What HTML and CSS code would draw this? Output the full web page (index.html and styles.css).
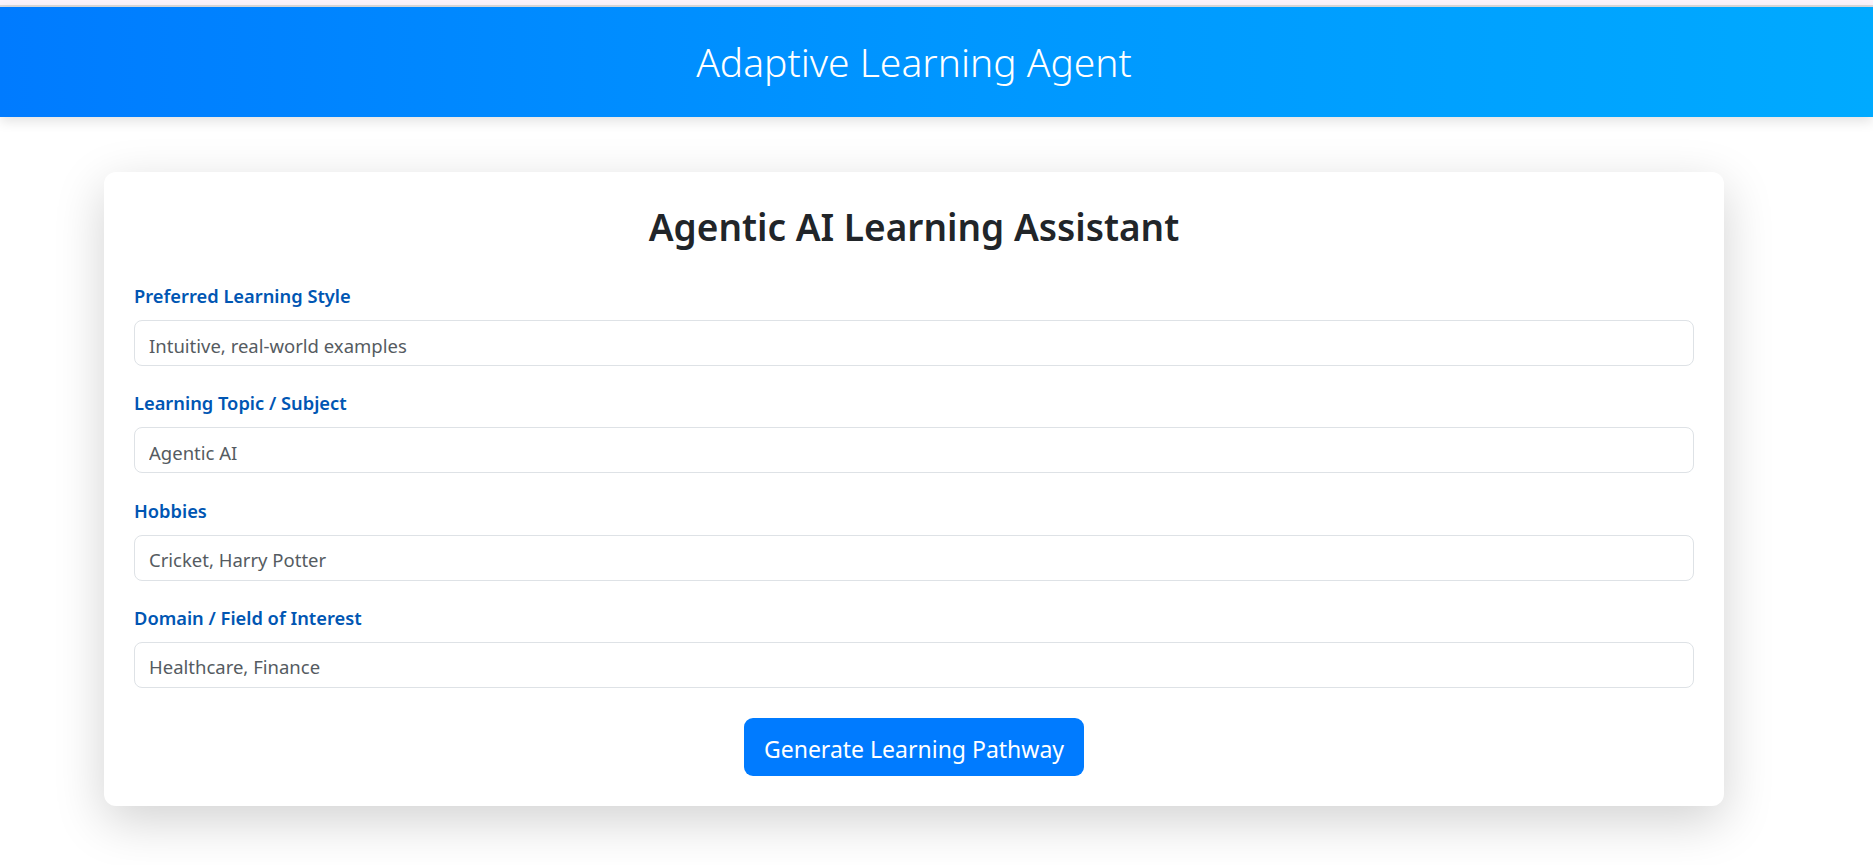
FILE: index.html
```html
<!DOCTYPE html>
<html lang="en">
<head>
<meta charset="utf-8">
<title>Adaptive Learning Agent</title>
<link rel="stylesheet" href="styles.css">
</head>
<body>
<div class="topstrip"></div>
<header class="app-header">
  <h1 class="app-title">Adaptive Learning Agent</h1>
</header>
<main class="main">
  <section class="card">
    <h2 class="card-title">Agentic AI Learning Assistant</h2>
    <form class="form">
      <div class="field">
        <label class="field-label" for="style">Preferred Learning Style</label>
        <input class="field-input" id="style" type="text" value="Intuitive, real-world examples">
      </div>
      <div class="field">
        <label class="field-label" for="topic">Learning Topic / Subject</label>
        <input class="field-input" id="topic" type="text" value="Agentic AI">
      </div>
      <div class="field">
        <label class="field-label" for="hobbies">Hobbies</label>
        <input class="field-input" id="hobbies" type="text" value="Cricket, Harry Potter">
      </div>
      <div class="field">
        <label class="field-label" for="domain">Domain / Field of Interest</label>
        <input class="field-input" id="domain" type="text" value="Healthcare, Finance">
      </div>
      <div class="actions">
        <button class="btn-primary" type="button">Generate Learning Pathway</button>
      </div>
    </form>
  </section>
</main>
</body>
</html>
```
FILE: styles.css
```css
* { box-sizing: border-box; }

html, body {
  margin: 0;
  padding: 0;
  background: #ffffff;
  font-family: "Noto Sans", "Open Sans", sans-serif;
  color: #212529;
}

.topstrip {
  height: 7px;
  background: #fcf3fb;
  border-bottom: 2px solid #dcdadc;
}

.app-header {
  height: 110px;
  background: linear-gradient(90deg, #007bff 0%, #0096ff 50%, #00aaff 100%);
  box-shadow: 0 4px 12px rgba(0, 0, 0, 0.12);
  padding-right: 45px;
  display: flex;
  justify-content: center;
  position: relative;
  z-index: 1;
}

.app-title {
  margin: 0;
  font-size: 39px;
  font-weight: 300;
  line-height: 110px;
  color: #ffffff;
}

.main {
  padding: 55px 149px 60px 104px;
}

.card {
  background: #ffffff;
  border-radius: 12px;
  box-shadow: 0 15px 50px rgba(0, 0, 0, 0.18);
  padding: 30px;
}

.card-title {
  margin: 0 0 32px 0;
  font-size: 37px;
  font-weight: 600;
  line-height: 50px;
  text-align: center;
  color: #212529;
}

.form {
  display: flex;
  flex-direction: column;
  gap: 25.3px;
}

.field {
  display: flex;
  flex-direction: column;
}

.field-label {
  font-size: 18.3px;
  font-weight: 600;
  line-height: 24px;
  color: #0056b3;
  margin-bottom: 12px;
}

.field-input {
  height: 46px;
  width: 100%;
  border: 1px solid #dee2e6;
  border-radius: 8px;
  padding: 4px 14px 0 14px;
  font-family: "Noto Sans", "Open Sans", sans-serif;
  font-size: 18.5px;
  color: #555b61;
  background: #ffffff;
  outline: none;
}

.actions {
  display: flex;
  justify-content: center;
  margin-top: 4.7px;
}

.btn-primary {
  width: 340px;
  height: 58px;
  border: none;
  border-radius: 9px;
  background: #007bff;
  color: #ffffff;
  font-family: "Noto Sans", "Open Sans", sans-serif;
  font-size: 23px;
  font-weight: 400;
  line-height: 58px;
  padding: 2px 0 0 0;
  cursor: pointer;
}
```
